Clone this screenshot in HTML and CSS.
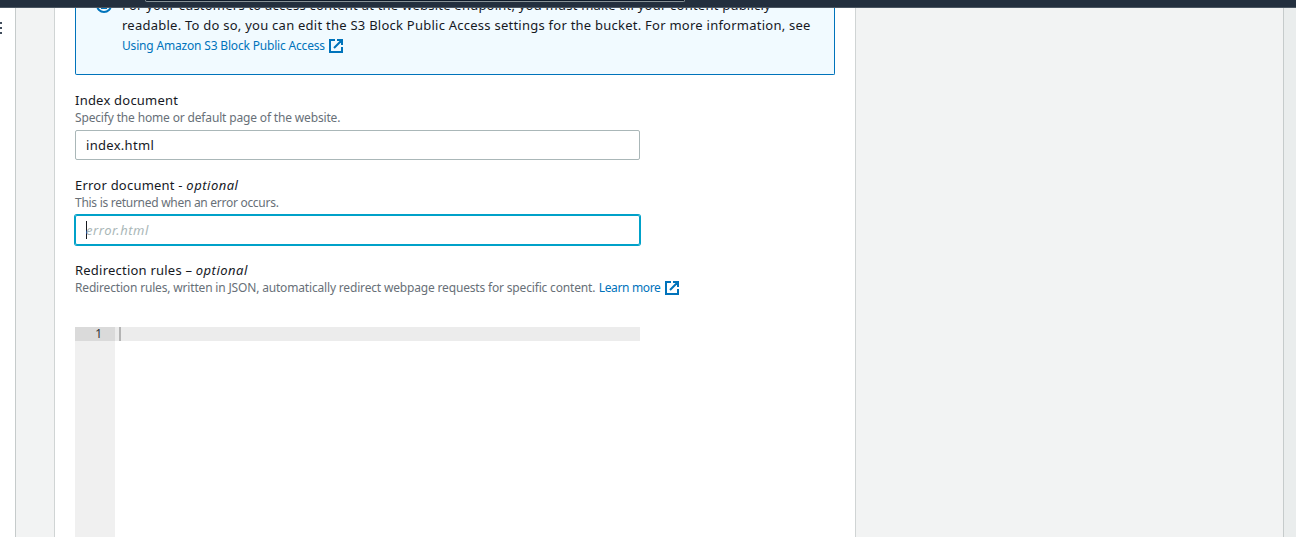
FILE: index.html
```html
<!DOCTYPE html>
<html lang="en">
<head>
<meta charset="utf-8">
<title>Edit static website hosting</title>
<link rel="stylesheet" href="styles.css">
</head>
<body>
<header class="topbar"><div class="search"></div></header>
<div class="layout">
  <aside class="sidebar">
    <svg class="menu" width="3" height="13" viewBox="0 0 3 13"><path d="M0 1h2M0 6h2M0 11h2" stroke="#414d5c" stroke-width="2"/></svg>
  </aside>
  <main class="content">
    <section class="card">
      <div class="alert">
        <svg class="info" width="16" height="16" viewBox="0 0 16 16" fill="none" stroke="#0073bb" stroke-width="2"><circle cx="8" cy="8" r="7"/><path d="M8 11V7H6.500M5 11h6M8 4v2"/></svg>
        <div class="message">
          <p class="line line-first">For your customers to access content at the website endpoint, you must make all your content publicly</p>
          <p class="line line-second">readable. To do so, you can edit the S3 Block Public Access settings for the bucket. For more information, see</p>
          <a class="link access"><span class="link-access">Using Amazon S3 Block Public Access</span><svg class="external" width="14" height="14" viewBox="0 0 14 14" fill="none" stroke="#0073bb" stroke-width="2"><path d="M6 1H1v12h12V8M8 1h5v5M13 1 5 9"/></svg></a>
        </div>
      </div>
      <div class="field">
        <label class="label label-index">Index document</label>
        <p class="hint hint-index">Specify the home or default page of the website.</p>
        <div class="input"><span class="value">index.html</span></div>
      </div>
      <div class="field">
        <label class="label label-error">Error document - <i>optional</i></label>
        <p class="hint hint-error">This is returned when an error occurs.</p>
        <div class="input focused"><span class="caret"></span><span class="placeholder">error.html</span></div>
      </div>
      <div class="field field-rules">
        <label class="label label-rules">Redirection rules – <i>optional</i></label>
        <p class="hint hint-row"><span class="hint-rules">Redirection rules, written in JSON, automatically redirect webpage requests for specific content.</span><a class="link learn"><span class="link-learn">Learn more</span><svg class="external" width="14" height="14" viewBox="0 0 14 14" fill="none" stroke="#0073bb" stroke-width="2"><path d="M6 1H1v12h12V8M8 1h5v5M13 1 5 9"/></svg></a></p>
      </div>
      <div class="editor">
        <div class="gutter"><div class="number">1</div></div>
        <div class="code"><div class="active-line"><span class="cursor"></span></div></div>
      </div>
    </section>
  </main>
  <aside class="tools"></aside>
</div>
</body>
</html>
```
FILE: styles.css
```css
* { box-sizing: border-box; }
body { margin: 0; height: 537px; overflow: hidden; display: flex; flex-direction: column; background: #f2f3f3; color: #16191f; font-family: "Noto Sans", sans-serif; font-size: 13px; }
p { margin: 0; }
.topbar { height: 8px; flex: none; background: #232f3e; border-bottom: 1px solid #4a5561; }
.search { width: 540px; height: 2px; margin-left: 145px; background: #0f1b2a; border: 1px solid #879196; border-top: 0; border-radius: 0 0 2px 2px; }
.layout { flex: 1; min-height: 0; display: flex; }
.sidebar { width: 16px; background: #fff; border-right: 1px solid #c6cbcb; }
.menu { display: block; margin-top: 14px; }
.content { flex: 1; padding-left: 38px; }
.card { width: 802px; height: 529px; background: #fff; border: 1px solid #d0d4d4; border-width: 0 1px; padding-left: 20px; overflow: hidden; }
.alert { width: 760px; height: 67px; overflow: hidden; display: flex; background: #f1faff; border: 1px solid #0073bb; border-top: 0; border-radius: 0 0 2px 2px; padding-left: 20px; }
.info { flex: none; margin-top: -11px; }
.message { margin: -13px 0 0 10px; }
.line { height: 20px; line-height: 20px; white-space: nowrap; }
.line-first { letter-spacing: .225px; }
.line-second { letter-spacing: .245px; }
.link { display: flex; align-items: center; color: #0073bb; font-size: 12px; line-height: 20px; white-space: nowrap; }
.access { margin-top: 1px; }
.link-access { letter-spacing: -.18px; }
.external { margin-left: 4px; flex: none; }
.field { width: 620px; height: 85px; padding-top: 15px; }
.field-rules { height: 82px; }
.label { display: block; height: 20px; line-height: 20px; white-space: nowrap; letter-spacing: .22px; }
.hint { height: 16px; line-height: 16px; font-size: 12px; color: #687078; white-space: nowrap; }
.hint-index { letter-spacing: -.16px; }
.hint-error { letter-spacing: -.28px; }
.hint-rules { letter-spacing: -.17px; }
.link-learn { letter-spacing: -.35px; }
.input { width: 565px; height: 30px; margin-top: 4px; padding-left: 10px; display: flex; align-items: center; border: 1px solid #aab7b8; border-radius: 2px; line-height: 20px; }
.focused { border-color: #00a1c9; box-shadow: 0 0 0 1px #00a1c9; }
.caret { width: 1px; height: 18px; background: #16191f; margin-right: -1px; }
.value { letter-spacing: .3px; }
.placeholder { color: #aab7b8; font-style: italic; letter-spacing: .55px; }
.label i { letter-spacing: .5px; }
.hint-row { display: flex; }
.learn { line-height: 16px; margin-left: 3.5px; }
.editor { width: 565px; height: 210px; display: flex; font-size: 12px; line-height: 14px; }
.gutter { width: 40px; background: #f0f0f0; }
.number { height: 14px; background: #dadada; text-align: right; padding-right: 13px; color: #333; font-size: 12px; }
.code { flex: 1; }
.active-line { height: 14px; background: #ececec; padding-left: 4px; }
.cursor { display: block; width: 2px; height: 14px; background: #b4b4b4; }
.tools { width: 13px; background: #eaeded; border-left: 1px solid #c6cbcb; }
```
